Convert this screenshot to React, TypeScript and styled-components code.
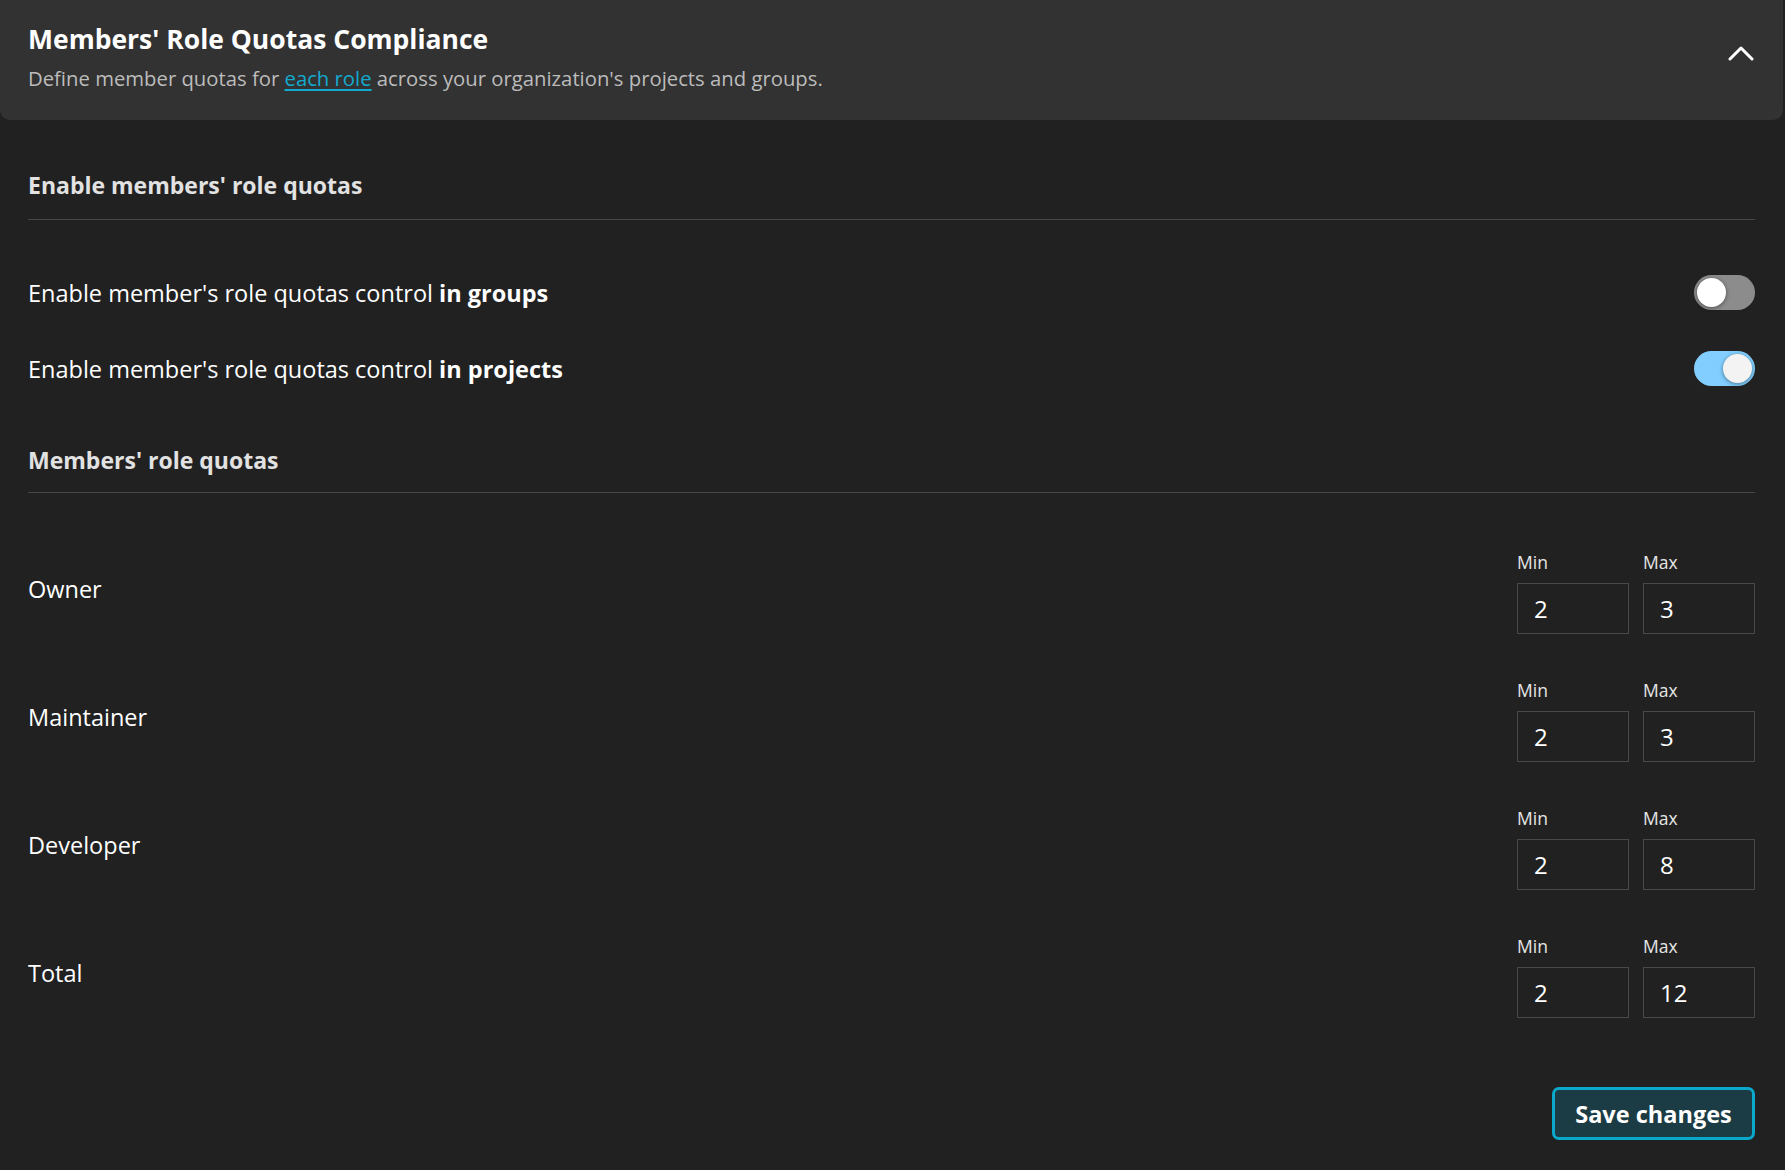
import React, { useState } from "react";
import styled, { createGlobalStyle, css } from "styled-components";

const GlobalStyle = createGlobalStyle`
  html, body {
    margin: 0;
    padding: 0;
    background: #212121;
  }
  body {
    font-family: "Open Sans", "Noto Sans", "Liberation Sans", sans-serif;
    color: #ffffff;
    -webkit-font-smoothing: antialiased;
  }
  * { box-sizing: border-box; }
`;

const Page = styled.div`
  width: 1783px;
  min-height: 1170px;
  background: #212121;
`;

const Header = styled.header`
  display: flex;
  align-items: flex-start;
  justify-content: space-between;
  background: #323232;
  border-radius: 0 0 10px 10px;
  padding: 24px 29px 29px 28px;
`;

const HeaderText = styled.div`
  display: flex;
  flex-direction: column;
  gap: 11px;
`;

const Title = styled.h1`
  margin: 0;
  font-size: 26.5px;
  line-height: 30px;
  font-weight: 700;
  color: #ffffff;
`;

const Subtitle = styled.p`
  margin: 0;
  font-size: 20.3px;
  line-height: 26px;
  color: #bcbcbc;
`;

const Link = styled.a`
  color: #12aace;
  text-decoration: underline;
  text-underline-offset: 3px;
`;

const Chevron = styled.button`
  display: flex;
  margin-top: 21px;
  padding: 0;
  border: none;
  background: transparent;
  cursor: pointer;
`;

const Body = styled.main`
  display: flex;
  flex-direction: column;
  padding: 51px 28px 30px 28px;
`;

const SectionTitle = styled.h2<{ $gapTop?: number; $padBottom?: number }>`
  margin: ${(p) => p.$gapTop ?? 0}px 0 0 0;
  padding-bottom: ${(p) => p.$padBottom ?? 20}px;
  border-bottom: 1px solid #474747;
  font-size: 23px;
  line-height: 28px;
  font-weight: 700;
  color: #e2e2e2;
`;

const ToggleList = styled.div`
  display: flex;
  flex-direction: column;
  gap: 41px;
  margin-top: 55px;
`;

const ToggleRow = styled.div`
  display: flex;
  align-items: center;
  justify-content: space-between;
  height: 35px;
`;

const RowText = styled.span`
  font-size: 23.5px;
  color: #ffffff;
  b { font-weight: 700; }
`;

const Track = styled.button<{ $on: boolean }>`
  position: relative;
  width: 61px;
  height: 35px;
  padding: 0;
  border: none;
  border-radius: 18px;
  cursor: pointer;
  background: ${(p) => (p.$on ? "#82cfff" : "#8c8c8c")};
`;

const Knob = styled.span<{ $on: boolean }>`
  position: absolute;
  top: 3px;
  width: 29px;
  height: 29px;
  border-radius: 50%;
  box-shadow: 0 1px 4px rgba(0, 0, 0, 0.45);
  ${(p) =>
    p.$on
      ? css`
          right: 3px;
          background: #f3f3f3;
        `
      : css`
          left: 3px;
          background: #ffffff;
        `}
`;

const QuotaList = styled.div`
  display: flex;
  flex-direction: column;
  gap: 46px;
  margin-top: 59px;
`;

const QuotaRow = styled.div`
  display: flex;
  align-items: center;
  justify-content: space-between;
`;

const RoleName = styled.span`
  font-size: 23.5px;
  color: #ffffff;
  margin-bottom: 8px;
`;

const Fields = styled.div`
  display: flex;
  gap: 14px;
`;

const Field = styled.label`
  display: flex;
  flex-direction: column;
  gap: 11px;
`;

const FieldLabel = styled.span`
  font-size: 17.5px;
  line-height: 20px;
  color: #e6e6e6;
`;

const NumberInput = styled.input`
  width: 112px;
  height: 51px;
  padding: 0 0 0 16px;
  border: 1px solid #494949;
  border-radius: 0;
  background: transparent;
  color: #ffffff;
  font-family: inherit;
  font-size: 24px;
  outline: none;
`;

const Footer = styled.div`
  display: flex;
  justify-content: flex-end;
  margin-top: 69px;
`;

const SaveButton = styled.button`
  width: 203px;
  height: 53px;
  border: 3px solid #0aa9cc;
  border-radius: 7px;
  background: #1b3c44;
  color: #ffffff;
  font-family: inherit;
  font-size: 23.5px;
  font-weight: 700;
  cursor: pointer;
`;

type Quota = { role: string; min: string; max: string };

const initialQuotas: Quota[] = [
  { role: "Owner", min: "2", max: "3" },
  { role: "Maintainer", min: "2", max: "3" },
  { role: "Developer", min: "2", max: "8" },
  { role: "Total", min: "2", max: "12" },
];

function Toggle({ on, onChange }: { on: boolean; onChange: (v: boolean) => void }) {
  return (
    <Track $on={on} onClick={() => onChange(!on)} aria-pressed={on}>
      <Knob $on={on} />
    </Track>
  );
}

export default function App() {
  const [groups, setGroups] = useState(false);
  const [projects, setProjects] = useState(true);
  const [quotas, setQuotas] = useState<Quota[]>(initialQuotas);

  const update = (i: number, key: "min" | "max", v: string) =>
    setQuotas((q) => q.map((item, idx) => (idx === i ? { ...item, [key]: v } : item)));

  return (
    <Page>
      <GlobalStyle />
      <Header>
        <HeaderText>
          <Title>Members' Role Quotas Compliance</Title>
          <Subtitle>
            Define member quotas for <Link href="#">each role</Link> across your organization's projects and groups.
          </Subtitle>
        </HeaderText>
        <Chevron aria-label="Collapse">
          <svg width="26" height="16" viewBox="0 0 26 16" fill="none">
            <polyline points="2,14 13,3 24,14" stroke="#ffffff" strokeWidth="3" strokeLinecap="round" strokeLinejoin="round" />
          </svg>
        </Chevron>
      </Header>
      <Body>
        <SectionTitle>Enable members' role quotas</SectionTitle>
        <ToggleList>
          <ToggleRow>
            <RowText>
              Enable member's role quotas control <b>in groups</b>
            </RowText>
            <Toggle on={groups} onChange={setGroups} />
          </ToggleRow>
          <ToggleRow>
            <RowText>
              Enable member's role quotas control <b>in projects</b>
            </RowText>
            <Toggle on={projects} onChange={setProjects} />
          </ToggleRow>
        </ToggleList>
        <SectionTitle $gapTop={60} $padBottom={18}>Members' role quotas</SectionTitle>
        <QuotaList>
          {quotas.map((q, i) => (
            <QuotaRow key={q.role}>
              <RoleName>{q.role}</RoleName>
              <Fields>
                <Field>
                  <FieldLabel>Min</FieldLabel>
                  <NumberInput value={q.min} onChange={(e) => update(i, "min", e.target.value)} />
                </Field>
                <Field>
                  <FieldLabel>Max</FieldLabel>
                  <NumberInput value={q.max} onChange={(e) => update(i, "max", e.target.value)} />
                </Field>
              </Fields>
            </QuotaRow>
          ))}
        </QuotaList>
        <Footer>
          <SaveButton>Save changes</SaveButton>
        </Footer>
      </Body>
    </Page>
  );
}
